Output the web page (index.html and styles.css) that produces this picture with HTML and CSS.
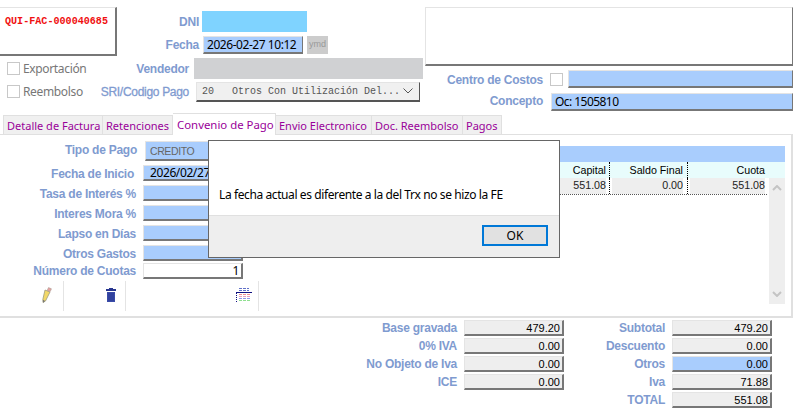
FILE: index.html
```html
<!DOCTYPE html>
<html lang="es">
  <head>
    <meta charset="UTF-8" />
    <meta name="viewport" content="width=device-width, initial-scale=1.0" />
    <title>Factura</title>
    <link rel="stylesheet" href="styles.css">
  </head>

  <body>
    <div class="top">
      <div class="top-left">
        <div class="doc-row">
          <div class="doc-box">QUI-FAC-000040685</div>
          <div class="doc-fields">
            <div class="row">
              <span class="lbl lbl-dni">DNI</span>
              <div class="fld fld-dni"></div>
            </div>
            <div class="row row-fecha">
              <span class="lbl lbl-fecha">Fecha</span>
              <div class="fld fld-fecha">2026-02-27 10:12</div>
              <div class="ymd">ymd</div>
            </div>
          </div>
        </div>
        <div class="row row-vendedor">
          <span class="check"></span>
          <span class="check-text check-text-a">Exportación</span>
          <span class="lbl lbl-vendedor">Vendedor</span>
          <div class="fld-vendedor"></div>
        </div>
        <div class="row row-sri">
          <span class="check"></span>
          <span class="check-text check-text-b">Reembolso</span>
          <span class="lbl lbl-sri">SRI/Codigo Pago</span>
          <div class="select">
            <span>20&nbsp;&nbsp;&nbsp;Otros Con Utilización Del...</span>
            <svg width="10" height="6" viewBox="0 0 10 6"><path d="M0.5 0.5 L5 5 L9.5 0.5" fill="none" stroke="#555" stroke-width="1"/></svg>
          </div>
        </div>
      </div>
      <div class="top-right">
        <div class="notes"></div>
        <div class="row row-centro">
          <span class="lbl lbl-right lbl-centro">Centro de Costos</span>
          <span class="check check-centro"></span>
          <div class="fld fld-centro"></div>
        </div>
        <div class="row row-concepto">
          <span class="lbl lbl-right lbl-concepto">Concepto</span>
          <div class="fld fld-concepto">Oc: 1505810</div>
        </div>
      </div>
    </div>

    <nav class="tabs">
      <div class="tab tab-1">Detalle de Factura</div>
      <div class="tab tab-2">Retenciones</div>
      <div class="tab tab-3 activo">Convenio de Pago</div>
      <div class="tab tab-4">Envio Electronico</div>
      <div class="tab tab-5">Doc. Reembolso</div>
      <div class="tab tab-6">Pagos</div>
    </nav>

    <section class="panel">
      <div class="pago">
        <div class="pago-row pago-tipo"><span class="lbl">Tipo de Pago</span><div class="fld pago-fld pago-gris">CREDITO</div></div>
        <div class="pago-row pago-inicio"><span class="lbl">Fecha de Inicio</span><div class="fld pago-fld">2026/02/27</div></div>
        <div class="pago-row"><span class="lbl">Tasa de Interés %</span><div class="fld pago-fld"></div></div>
        <div class="pago-row"><span class="lbl">Interes Mora %</span><div class="fld pago-fld"></div></div>
        <div class="pago-row"><span class="lbl">Lapso en Días</span><div class="fld pago-fld"></div></div>
        <div class="pago-row pago-otros"><span class="lbl">Otros Gastos</span><div class="fld pago-fld"></div></div>
        <div class="pago-row pago-cuotas"><span class="lbl">Número de Cuotas</span><div class="fld pago-fld pago-blanco">1</div></div>
        <div class="tools">
          <div class="tool tool-lapiz">
            <svg width="10" height="16" viewBox="0 0 10 16">
              <path d="M3 3 L8 5 L3.5 14 L1 15.5 L0.8 12.5 Z" fill="#f2d868" stroke="#9a9a80" stroke-width="0.8"/>
              <path d="M6.5 0.6 L9.4 1.8 L8.2 4.6 L5.2 3.4 Z" fill="#e8a0a0" stroke="#a89a90" stroke-width="0.6"/>
              <path d="M1 12.8 L3.2 14 L1 15.8 Z" fill="#777"/>
            </svg>
          </div>
          <div class="tool tool-basura">
            <svg width="10" height="14" viewBox="0 0 10 14">
              <rect x="3" y="0" width="4" height="1" fill="#27358f"/>
              <rect x="0" y="1" width="10" height="2" fill="#27358f"/>
              <rect x="1" y="4" width="8" height="10" fill="#3a4ba8"/>
              <path d="M3 5 V13 M5 5 V13 M7 5 V13" stroke="#27358f" stroke-width="0.8"/>
            </svg>
          </div>
          <div class="tool tool-grid">
            <svg width="16" height="14" viewBox="0 0 16 14">
              <path d="M3 0.5 H13 M3 2.5 H13" stroke="#6070c8" stroke-dasharray="3 1"/>
              <rect x="0" y="4" width="16" height="1" fill="#101080"/>
              <path d="M3 6.5 H15" stroke="#f09090" stroke-dasharray="3 1"/>
              <path d="M3 8.5 H15" stroke="#e8a0c0" stroke-dasharray="3 1"/>
              <path d="M3 10.5 H15" stroke="#9098e8" stroke-dasharray="3 1"/>
              <path d="M3 12.5 H15" stroke="#90e090" stroke-dasharray="3 1"/>
              <path d="M0.5 5 V14" stroke="#101080" stroke-dasharray="1 1"/>
            </svg>
          </div>
        </div>
      </div>

      <div class="tabla">
        <div class="banda"></div>
        <div class="cols cabecera">
          <div class="c c-relleno"></div>
          <div class="c c-capital">Capital</div>
          <div class="c c-saldo">Saldo Final</div>
          <div class="c c-cuota">Cuota</div>
        </div>
        <div class="cuerpo">
          <div class="filas">
            <div class="cols fila">
              <div class="c c-relleno"></div>
              <div class="c c-capital">551.08</div>
              <div class="c c-saldo">0.00</div>
              <div class="c c-cuota">551.08</div>
            </div>
          </div>
          <div class="scroll">
            <svg width="10" height="6" viewBox="0 0 10 6"><path d="M1 5 L5 1 L9 5" fill="none" stroke="#c4c4c4" stroke-width="2"/></svg>
            <svg width="10" height="6" viewBox="0 0 10 6"><path d="M1 1 L5 5 L9 1" fill="none" stroke="#c4c4c4" stroke-width="2"/></svg>
          </div>
        </div>
      </div>
    </section>

    <section class="totales">
      <div class="tot-col tot-a">
        <div class="tot-row"><span class="lbl">Base gravada</span><div class="fld tot-fld">479.20</div></div>
        <div class="tot-row"><span class="lbl">0% IVA</span><div class="fld tot-fld">0.00</div></div>
        <div class="tot-row"><span class="lbl">No Objeto de Iva</span><div class="fld tot-fld">0.00</div></div>
        <div class="tot-row"><span class="lbl">ICE</span><div class="fld tot-fld">0.00</div></div>
      </div>
      <div class="tot-col tot-b">
        <div class="tot-row"><span class="lbl">Subtotal</span><div class="fld tot-fld">479.20</div></div>
        <div class="tot-row"><span class="lbl">Descuento</span><div class="fld tot-fld">0.00</div></div>
        <div class="tot-row"><span class="lbl">Otros</span><div class="fld tot-fld tot-azul">0.00</div></div>
        <div class="tot-row"><span class="lbl">Iva</span><div class="fld tot-fld">71.88</div></div>
        <div class="tot-row"><span class="lbl">TOTAL</span><div class="fld tot-fld">551.08</div></div>
      </div>
    </section>

    <div class="dialogo">
      <div class="dialogo-msg">La fecha actual es diferente a la del Trx no se hizo la FE</div>
      <div class="dialogo-pie"><button class="ok">OK</button></div>
    </div>
  </body>
</html>
```

FILE: styles.css
```css
html, body {
  margin: 0;
  height: 409px;
  overflow: hidden;
  background-color: #fff;
  font-family: "Liberation Sans", Arial, sans-serif;
  font-size: 12px;
  color: #000;
}
.row {
  display: flex;
  align-items: center;
}
.lbl {
  font-weight: bold;
  color: #7f9bd0;
  letter-spacing: -0.25px;
  white-space: nowrap;
}
.fld {
  box-sizing: border-box;
  background-color: #a9cdfd;
  border-top: 1px solid #e4e4e4;
  border-left: 1px solid #e4e4e4;
  border-right: 2px solid #777;
  border-bottom: 2px solid #777;
  white-space: nowrap;
  overflow: hidden;
}
.check {
  box-sizing: border-box;
  display: block;
  flex: none;
  width: 13px;
  height: 13px;
  background-color: #fff;
  border: 1px solid #c8c8c8;
}
.check-text {
  color: #777;
  font-family: "Noto Sans", sans-serif;
  letter-spacing: -0.35px;
  margin-left: 3px;
}

/* parte de arriba */
.top {
  display: flex;
  padding-top: 7px;
  height: 105px;
}
.top-left {
  width: 425px;
  flex: none;
}
.doc-row {
  display: flex;
  height: 51px;
}
.doc-box {
  box-sizing: border-box;
  width: 117px;
  height: 49px;
  padding: 7px 0 0 5px;
  border-top: 1px solid #e4e4e4;
  border-right: 2px solid #777;
  border-bottom: 2px solid #777;
  font-family: "Liberation Mono", monospace;
  font-weight: bold;
  font-size: 10.1px;
  line-height: 14px;
  color: #f01010;
}
.doc-fields {
  padding-top: 4px;
}
.lbl-dni {
  width: 82px;
  text-align: right;
}
.fld-dni {
  width: 105px;
  height: 21px;
  margin-left: 3px;
  background-color: #7fd3ff;
  border: 0;
}
.row-fecha {
  margin-top: 4px;
}
.lbl-fecha {
  width: 82px;
  text-align: right;
}
.fld-fecha {
  width: 100px;
  height: 18px;
  margin-left: 4px;
  padding-left: 3px;
  line-height: 15px;
  font-family: "Noto Sans", sans-serif;
  letter-spacing: -0.45px;
  border-right-width: 1px;
}
.ymd {
  width: 21px;
  height: 18px;
  margin-left: 4px;
  background-color: #ccc;
  color: #999;
  font-size: 9px;
  line-height: 17px;
  text-align: center;
}
.row-vendedor {
  height: 21px;
  padding-left: 7px;
}
.check-text-a {
  width: 89px;
}
.lbl-vendedor {
  width: 77px;
  text-align: right;
}
.fld-vendedor {
  width: 229px;
  height: 21px;
  margin-left: 5px;
  background-color: #d0d1d3;
}
.row-sri {
  height: 19px;
  margin-top: 3px;
  padding-left: 7px;
}
.check-text-b {
  width: 66px;
}
.lbl-sri {
  width: 100px;
  text-align: right;
  letter-spacing: -0.3px;
  font-weight: normal;
  -webkit-text-stroke: 0.3px #7f9bd0;
}
.select {
  box-sizing: border-box;
  display: flex;
  justify-content: space-between;
  align-items: center;
  width: 224px;
  height: 20px;
  margin-left: 7px;
  padding: 0 6px 0 5px;
  background-color: #f0f0f0;
  border-top: 1px solid #e4e4e4;
  border-left: 1px solid #e4e4e4;
  border-right: 1px solid #555;
  border-bottom: 2px solid #555;
  font-family: "Liberation Mono", monospace;
  font-size: 10px;
  color: #555;
  white-space: nowrap;
}
.select svg {
  flex: none;
}
.top-right {
  width: 368px;
  flex: none;
}
.notes {
  box-sizing: border-box;
  height: 59px;
  background-color: #fff;
  border-top: 1px solid #e4e4e4;
  border-left: 1px solid #e4e4e4;
  border-right: 1px solid #777;
  border-bottom: 2px solid #777;
}
.lbl-right {
  width: 118px;
  text-align: right;
}
.lbl-centro {
  padding-top: 2px;
}
.row-centro {
  margin-top: 4px;
  height: 18px;
}
.check-centro {
  margin-left: 7px;
}
.fld-centro {
  width: 225px;
  height: 18px;
  margin-left: 5px;
  border-right-width: 1px;
}
.row-concepto {
  margin-top: 5px;
  height: 18px;
}
.lbl-concepto {
  padding-bottom: 3px;
}
.fld-concepto {
  width: 242px;
  height: 18px;
  margin-left: 8px;
  padding-left: 3px;
  line-height: 15px;
  font-family: "Noto Sans", sans-serif;
  letter-spacing: -0.55px;
  border-right-width: 1px;
}

/* pestanas */
.tabs {
  display: flex;
  align-items: flex-end;
  height: 22px;
  padding-left: 3px;
}
.tab {
  box-sizing: border-box;
  height: 19px;
  padding-left: 3px;
  background-color: #f0f0f0;
  border: 1px solid #e0e0e0;
  border-bottom: 0;
  border-left: 0;
  color: #990099;
  font-family: "Noto Sans", sans-serif;
  font-size: 11px;
  line-height: 20px;
  white-space: nowrap;
  overflow: hidden;
}
.tab-1 { width: 100px; border-left: 1px solid #e0e0e0; }
.tab-2 { width: 70px; }
.tab-3 { width: 103px; }
.tab-4 { width: 96px; }
.tab-5 { width: 91px; }
.tab-6 { width: 39px; }
.activo {
  position: relative;
  height: 22px;
  margin-bottom: -1px;
  padding-left: 4px;
  background-color: #fff;
  font-size: 11.4px;
  line-height: 22px;
}

.panel {
  box-sizing: border-box;
  display: flex;
  width: 793px;
  height: 184px;
  border-top: 1px solid #e0e0e0;
  border-bottom: 2px solid #e0e0e0;
  border-right: 2px solid #e0e0e0;
}
.pago {
  width: 243px;
  flex: none;
  padding-top: 6px;
}
.pago-row {
  display: flex;
  justify-content: flex-end;
  align-items: center;
  height: 16px;
  margin-bottom: 4px;
}
.pago-row .lbl {
  margin-right: 7px;
  padding-top: 2px;
}
.pago-fld {
  width: 100px;
  height: 16px;
  flex: none;
  padding-left: 6px;
  line-height: 14px;
  font-family: "Noto Sans", sans-serif;
  letter-spacing: -0.4px;
}
.pago-tipo {
  height: 20px;
  margin-bottom: 4px;
}
.pago-tipo .lbl {
  margin-right: 8px;
  padding-top: 0;
  padding-bottom: 2px;
}
.pago-gris {
  width: 98px;
  height: 20px;
  padding-left: 4px;
  line-height: 19px;
  color: #666;
  font-family: "Liberation Sans", sans-serif;
  font-size: 10.5px;
  letter-spacing: -0.4px;
}
.pago-inicio .lbl {
  margin-right: 9px;
}
.pago-otros {
  height: 15px;
  margin-bottom: 3px;
}
.pago-blanco {
  background-color: #fff;
  padding-left: 0;
  text-align: right;
  padding-right: 2px;
}
.pago-cuotas {
  margin-bottom: 2px;
}
.pago-cuotas .lbl {
  padding-top: 0;
}
.tools {
  display: flex;
  height: 30px;
  width: 259px;
  position: relative;
}
.tool {
  box-sizing: border-box;
  display: flex;
  flex: none;
  align-items: center;
  justify-content: flex-end;
  border-right: 1px solid #e4e4e4;
  padding-bottom: 2px;
}
.tool-lapiz { width: 64px; padding-right: 11px; }
.tool-basura { width: 62px; padding-right: 9px; }
.tool-grid { width: 133px; padding-right: 6px; }

.tabla {
  width: 542px;
  flex: none;
  padding-top: 11px;
  font-size: 10.7px;
}
.banda {
  height: 16px;
  background-color: #a9cdfd;
}
.cols {
  display: grid;
  grid-template-columns: 289px 78px 78px 79px;
}
.cabecera {
  height: 16px;
  line-height: 16px;
  background-color: #e8fcfc;
}
.c {
  box-sizing: border-box;
  text-align: right;
  padding-right: 3px;
}
.c-capital, .c-saldo {
  border-right: 1px dotted #000;
}
.c-saldo {
  padding-right: 4px;
}
.c-cuota {
  padding-right: 2px;
}
.fila {
  height: 16px;
  line-height: 15px;
  border-bottom: 1px dotted #555;
  color: #222;
}
.fila .c {
  background-color: #eee;
  background-clip: content-box;
  padding-left: 2px;
}
.fila .c-relleno {
  background-color: #fff;
}
.cuerpo {
  display: flex;
  justify-content: space-between;
}
.filas {
  width: 524px;
}
.scroll {
  box-sizing: border-box;
  display: flex;
  flex-direction: column;
  justify-content: space-between;
  align-items: center;
  width: 16px;
  height: 126px;
  padding: 7px 0;
  background-color: #eee;
}
.scroll svg {
  display: block;
}

/* totales */
.totales {
  display: flex;
  padding-top: 2px;
}
.tot-col {
  display: flex;
  flex-direction: column;
  gap: 2px;
  flex: none;
}
.tot-a { width: 564px; }
.tot-b { width: 208px; }
.tot-row {
  display: flex;
  justify-content: flex-end;
  align-items: center;
}
.tot-row .lbl {
  margin-right: 7px;
}
.tot-fld {
  width: 100px;
  height: 16px;
  background-color: #eee;
  text-align: right;
  font-size: 11px;
  line-height: 14px;
  padding-right: 2px;
}
.tot-azul {
  background-color: #a9cdfd;
}

/* dialogo encima de todo */
.dialogo {
  position: absolute;
  left: 208px;
  top: 140px;
  box-sizing: border-box;
  width: 352px;
  height: 118px;
  background-color: #fff;
  border: 1px solid #666;
  display: flex;
  flex-direction: column;
}
.dialogo-msg {
  height: 75px;
  padding: 45px 0 0 10px;
  box-sizing: border-box;
  font-family: "Noto Sans", sans-serif;
  font-size: 12px;
  letter-spacing: -0.4px;
  line-height: 17px;
  border-bottom: 1px solid #e0e0e0;
  white-space: nowrap;
}
.dialogo-pie {
  flex: 1;
  display: flex;
  justify-content: flex-end;
  align-items: flex-start;
  padding: 9px 11px 0 0;
  background-color: #eee;
}
.ok {
  box-sizing: border-box;
  width: 66px;
  height: 21px;
  padding: 0;
  background-color: #e1e1e1;
  border: 2px solid #0078d7;
  font-family: "Noto Sans", sans-serif;
  font-size: 12px;
  color: #000;
}
```
